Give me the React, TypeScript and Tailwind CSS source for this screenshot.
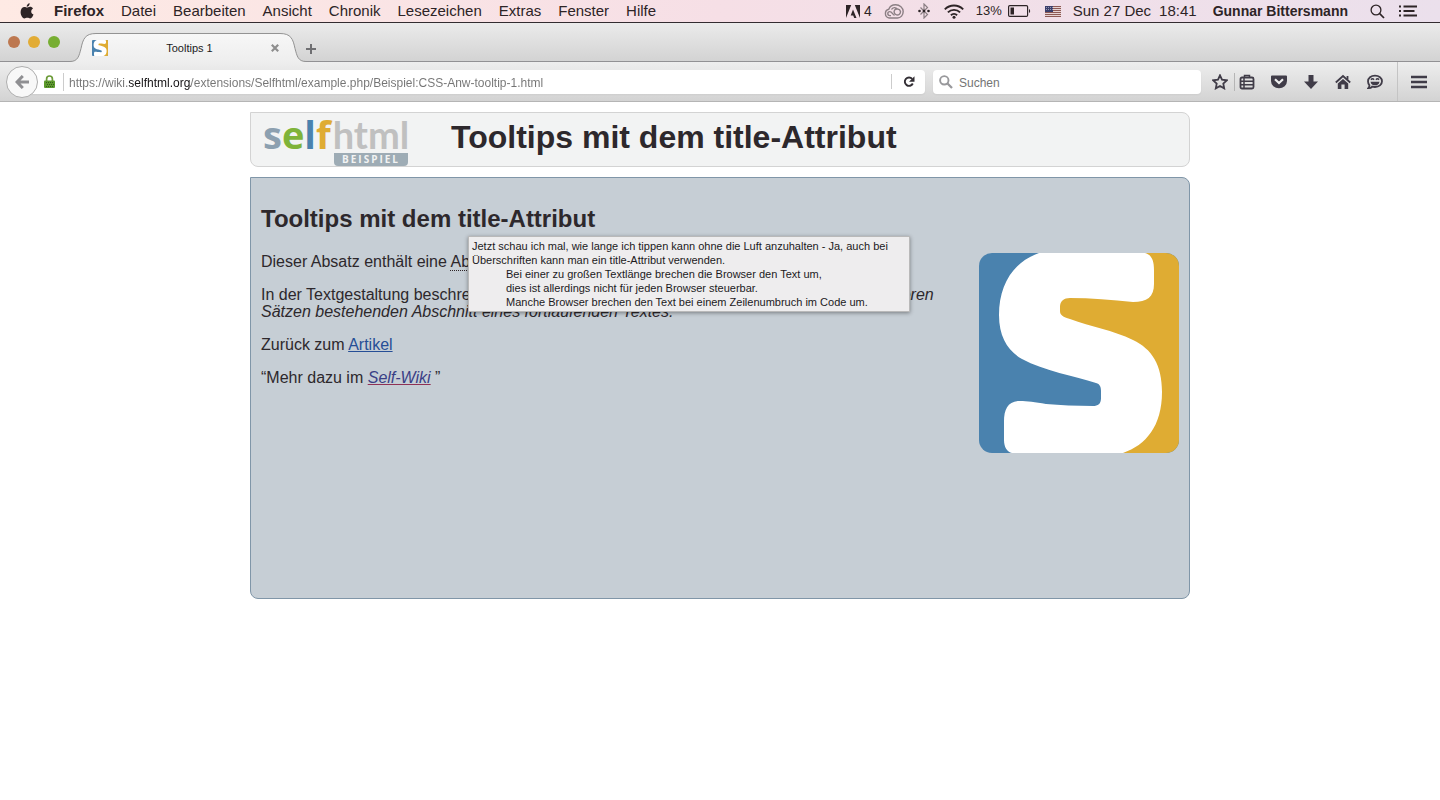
import { useState } from 'react';
import type { ReactNode } from 'react';

const MENUS = ['Datei', 'Bearbeiten', 'Ansicht', 'Chronik', 'Lesezeichen', 'Extras', 'Fenster', 'Hilfe'];

const URL = 'https://wiki.selfhtml.org/extensions/Selfhtml/example.php/Beispiel:CSS-Anw-tooltip-1.html';

// ── Icons ────────────────────────────────────
function SelfLogo({ className }: { className: string }) {
  return (
    <svg viewBox="0 0 200 200" className={className} aria-hidden="true">
      <clipPath id="tile"><rect width="200" height="200" rx="13" /></clipPath>
      <g clipPath="url(#tile)">
        <rect width="200" height="200" fill="#4a82ae" />
        <path d="M70 0H200V200H140V110L70 80Z" fill="#dfac33" />
        <path
          d="M60 0C34 9 20 32 20 62C20 84 29 98 43 106C65 118 96 123 117 130C121 131 122 134 122 138V145C122 151 119 153 114 153C97 153 81 152 67 151C56 149 48 148 41 148C29 148 25 156 25 169V187C25 194 28 199 33 200H144C167 192 183 173 183 139C183 112 173 96 154 87C134 77 112 74 91 66C84 64 81 62 81 58V54C81 48 85 45 91 45C112 45 133 47 154 49C168 49 175 44 175 31V17C175 8 173 2 166 0Z"
          fill="#fff"
        />
      </g>
    </svg>
  );
}

function AppleIcon() {
  return (
    <svg viewBox="0 0 14 16" className="h-4 w-3.5" fill="#2d2426" aria-hidden="true">
      <path d="M9.7.2c.1 1.9-1.4 3.6-3 3.5C6.5 2 8 .3 9.7.2ZM6.9 4.6c.7 0 1.6-.8 3.1-.8 1.3 0 2.4.7 3 1.6-2.7 1.7-2.1 5.1.5 6.1-.6 1.7-1.9 4-3.3 4-1 0-1.5-.7-2.9-.7s-1.9.7-2.9.7C2.7 15.5.6 12.3.6 9c0-3.2 1.9-5.1 3.9-5.1 1.1 0 1.9.7 2.4.7Z" />
    </svg>
  );
}

function AdobeIcon() {
  return (
    <svg viewBox="0 0 14 13" className="h-[13px] w-3.5" fill="#2d2426" aria-hidden="true">
      <path d="M0 0H5.2L0 13ZM8.8 0H14V13ZM7 4.5 10.5 13H8.2L7.2 10.4H4.7Z" />
    </svg>
  );
}

function CloudIcon() {
  return (
    <svg viewBox="0 0 20 15" className="h-[15px] w-5" fill="none" stroke="#8b7f84" strokeWidth="1.4" aria-hidden="true">
      <path d="M5.2 14A4.5 4.5 0 0 1 4.8 5.2C5.8 2.4 8.6.8 11.6.8C15.700.8 19.2 3.900 19.200 7.600C19.200 11.200 16.700 14 13.500 14Z" />
      <path d="M10.5 11.2C8.8 11.400 8.300 7.600 5.800 7.600A2 2 0 0 0 5.800 11.600H7M7.500 5.500C8.600 3.200 12 2.900 13.300 5.200M16.500 7.500A3.200 3.200 0 1 1 10.600 6.100C11.500 4.600 15.800 4.300 16.500 7.500Z" />
    </svg>
  );
}

function BluetoothIcon() {
  return (
    <svg viewBox="0 0 12 16" className="h-4 w-3" fill="none" aria-hidden="true">
      <path d="M2.5 4.5 9.5 11.5 6 15V1L9.5 4.5 2.5 11.5" stroke="#8b7f84" strokeWidth="1.2" />
      <g fill="#2d2426">
        <circle cx="1.5" cy="8" r="1.3" />
        <circle cx="6" cy="8" r="1.3" />
        <circle cx="10.5" cy="8" r="1.3" />
      </g>
    </svg>
  );
}

function WifiIcon() {
  return (
    <svg viewBox="0 0 20 15" className="h-[15px] w-5" fill="none" stroke="#2d2426" strokeWidth="1.9" aria-hidden="true">
      <path d="M.8 5.3A13 13 0 0 1 19.2 5.3" />
      <path d="M3.9 8.4A8.6 8.6 0 0 1 16.1 8.4" />
      <path d="M6.9 11.3A4.5 4.5 0 0 1 13.1 11.3" />
      <circle cx="10" cy="13.3" r="1.5" fill="#2d2426" stroke="none" />
    </svg>
  );
}

function BatteryIcon() {
  return (
    <svg viewBox="0 0 23 12" className="h-3 w-[23px]" aria-hidden="true">
      <rect x=".6" y=".6" width="19" height="10.8" rx="1.2" fill="none" stroke="#2d2426" strokeWidth="1.2" />
      <rect x="2.5" y="2.5" width="3.5" height="7" fill="#2d2426" />
      <path d="M21 4a2.3 2.3 0 0 1 0 4Z" fill="#2d2426" />
    </svg>
  );
}

function FlagIcon() {
  return (
    <svg viewBox="0 0 16 11" className="h-[11px] w-4" aria-hidden="true">
      <rect width="16" height="11" fill="#e6d3d3" />
      <path d="M0 .5H16M0 2.5H16M0 4.5H16M0 6.5H16M0 8.5H16M0 10.5H16" stroke="#8d5a55" />
      <rect width="8" height="6" fill="#3b3f6b" />
      <path d="M1 1.5H8M1 3.5H8" stroke="#a9a9c0" strokeWidth=".8" strokeDasharray="1 1" />
    </svg>
  );
}

function MenuSearchIcon() {
  return (
    <svg viewBox="0 0 15 15" className="size-[15px]" fill="none" stroke="#2d2426" aria-hidden="true">
      <circle cx="6" cy="6" r="4.9" strokeWidth="1.3" />
      <path d="M9.7 9.7 14 14" strokeWidth="1.7" />
    </svg>
  );
}

function MenuListIcon() {
  return (
    <svg viewBox="0 0 18 12" className="h-3 w-[18px]" stroke="#2d2426" strokeWidth="1.8" aria-hidden="true">
      <path d="M0 1.5H2M0 6H2M0 10.5H2M4.5 1.5H18M4.5 6H15.5M4.5 10.5H18" />
    </svg>
  );
}

function ToolIcon({ children }: { children: ReactNode }) {
  return (
    <svg viewBox="0 0 16 16" className="size-4" fill="none" stroke="#403c48" strokeWidth="1.8" aria-hidden="true">
      {children}
    </svg>
  );
}

function ToolButton({ label, children }: { label: string; children: ReactNode }) {
  return (
    <button type="button" aria-label={label} className="flex w-8 justify-center">
      <ToolIcon>{children}</ToolIcon>
    </button>
  );
}

// ── System menu bar ──────────────────────────
function MenuBar() {
  return (
    <nav className="flex h-[23px] items-center justify-between border-b border-[#332c30] bg-linear-to-r from-[#feeae4] via-[#f6dfe6] to-[#ebe0ec] pr-[23px] pl-5 text-[15px] leading-5 whitespace-nowrap text-[#2d2426]">
      <div className="flex items-center gap-[17px]">
        <button type="button" aria-label="Apple" className="mr-[3px]"><AppleIcon /></button>
        <button type="button" className="font-bold">Firefox</button>
        {MENUS.map(m => <button type="button" key={m}>{m}</button>)}
      </div>
      <div className="flex items-center">
        <AdobeIcon />
        <span className="mr-3 ml-1 text-sm">4</span>
        <CloudIcon />
        <span className="mx-3.5"><BluetoothIcon /></span>
        <WifiIcon />
        <span className="mr-1.5 ml-3 text-[13px]">13%</span>
        <BatteryIcon />
        <span className="mr-3 ml-3.5"><FlagIcon /></span>
        <span>Sun 27 Dec</span>
        <span className="mr-4 ml-2">18:41</span>
        <span className="mr-[22px] text-sm font-bold">Gunnar Bittersmann</span>
        <button type="button" aria-label="Suche" className="mr-3.5"><MenuSearchIcon /></button>
        <button type="button" aria-label="Mitteilungen"><MenuListIcon /></button>
      </div>
    </nav>
  );
}

// ── Firefox tabs ─────────────────────────────
function TabEdge({ className }: { className: string }) {
  return (
    <svg viewBox="0 0 26 29" className={className} aria-hidden="true">
      <defs>
        <linearGradient id="edge" x2="0" y2="1">
          <stop stopColor="#f7f7f7" />
          <stop offset="1" stopColor="#eeeeee" />
        </linearGradient>
      </defs>
      <path d="M0 28.5C8 28.5 9 23 11 15.5C13 6 15 .5 26 .5V29H0Z" fill="url(#edge)" />
      <path d="M0 28.5C8 28.5 9 23 11 15.5C13 6 15 .5 26 .5" fill="none" stroke="#939393" />
    </svg>
  );
}

function TabStrip() {
  return (
    <div className="flex h-[39px] items-end border-b border-[#929194] bg-linear-to-b from-[#ebebeb] to-[#d3d3d3] pl-2">
      <div className="mb-[13px] flex gap-2">
        <button type="button" aria-label="Schließen" className="size-3 rounded-full bg-[#bd7850]" />
        <button type="button" aria-label="Minimieren" className="size-3 rounded-full bg-[#e2ac35]" />
        <button type="button" aria-label="Maximieren" className="size-3 rounded-full bg-[#77ae32]" />
      </div>
      <div className="-mb-px ml-2.5 flex h-[29px]">
        <TabEdge className="h-[29px] w-[26px]" />
        <div className="flex w-[184px] items-center border-t border-[#939393] bg-linear-to-b from-[#f7f7f7] to-[#eeeeee]">
          <span className="-ml-1"><SelfLogo className="size-4" /></span>
          <span className="flex-1 text-center text-[11px] text-[#1c1a1c]">Tooltips 1</span>
          <button type="button" aria-label="Tab schließen" className="mr-px">
            <svg viewBox="0 0 8 8" className="size-2" stroke="#8e8e8e" strokeWidth="2.2" aria-hidden="true">
              <path d="M.8.8 7.2 7.2M7.2.8.8 7.2" />
            </svg>
          </button>
        </div>
        <TabEdge className="h-[29px] w-[26px] -scale-x-100" />
      </div>
      <button type="button" aria-label="Neuer Tab" className="mb-[7px]">
        <svg viewBox="0 0 10 10" className="size-2.5" stroke="#6f6f72" strokeWidth="2" aria-hidden="true">
          <path d="M5 0V10M0 5H10" />
        </svg>
      </button>
    </div>
  );
}

// ── Firefox toolbar ──────────────────────────
function Toolbar() {
  const [url, setUrl] = useState(URL);
  const [query, setQuery] = useState('');

  return (
    <div className="flex h-10 items-center border-b border-[#b5b5b5] bg-linear-to-b from-[#eeeeee] to-[#d3d3d3] pl-1.5">
      <button
        type="button"
        aria-label="Zurück"
        className="z-10 -mr-3 flex size-8 shrink-0 items-center justify-center rounded-full border border-[#aeaeae] bg-[#f8f8f8]"
      >
        <svg viewBox="0 0 14 14" className="size-3.5" fill="none" stroke="#8f8f92" strokeWidth="3" aria-hidden="true">
          <path d="M7.8 1 2 7 7.8 13M2 7H14" />
        </svg>
      </button>

      <div className="flex h-6 flex-1 items-center rounded-sm bg-white pl-[18px] shadow-xs">
        <svg viewBox="0 0 11 13" className="h-[13px] w-[11px]" aria-hidden="true">
          <path d="M2.6 6V3.9A2.9 2.9 0 0 1 8.4 3.9V6" fill="none" stroke="#6c9b38" strokeWidth="1.7" />
          <rect y="5.5" width="11" height="7.5" rx="1" fill="#5c9a2b" />
          <path d="M2 7.5H9M3 9.5H10M2 11.5H9" stroke="#35591f" strokeDasharray="1 1" />
        </svg>
        <span className="mr-[5px] ml-2 h-[18px] w-px bg-[#cccccc]" />
        {/* domain part of the address is darker than the rest */}
        <input
          aria-label="Adresse"
          value={url}
          onChange={e => setUrl(e.target.value)}
          className="h-6 min-w-0 flex-1 bg-[linear-gradient(90deg,#747474_60px,#141214_60px,#141214_122px,#747474_122px)] bg-clip-text pt-0.5 text-[12px] text-transparent caret-black outline-none"
        />
        <span className="h-[15px] w-px bg-[#cccccc]" />
        <button type="button" aria-label="Neu laden" className="flex w-[33px] justify-center">
          <svg viewBox="0 0 12 12" className="size-3" aria-hidden="true">
            <path d="M9.2 2.9A4.2 4.2 0 1 0 9.8 7.5" fill="none" stroke="#332f35" strokeWidth="1.9" />
            <path d="M11.5.3V5.8H6Z" fill="#332f35" />
          </svg>
        </button>
      </div>

      <label className="ml-2 flex h-6 w-[268px] items-center rounded-sm bg-white pl-1.5 shadow-xs">
        <svg viewBox="0 0 14 14" className="size-3.5" fill="none" stroke="#98989b" aria-hidden="true">
          <circle cx="5.3" cy="5.3" r="4.2" strokeWidth="1.9" />
          <path d="M8.5 8.5 13 13" strokeWidth="2.3" />
        </svg>
        <input
          aria-label="Suchen"
          placeholder="Suchen"
          value={query}
          onChange={e => setQuery(e.target.value)}
          className="ml-1.5 h-6 min-w-0 flex-1 bg-transparent pt-0.5 text-[12px] outline-none placeholder:text-[#747474]"
        />
      </label>

      <button type="button" aria-label="Lesezeichen hinzufügen" className="ml-[11px]">
        <ToolIcon>
          <path d="M8 1.3 10 5.7 14.8 6.3 11.3 9.6 12.2 14.4 8 12 3.8 14.4 4.7 9.6 1.2 6.3 6 5.7Z" />
        </ToolIcon>
      </button>
      <span className="ml-1.5 h-[18px] w-px bg-[#b5b5b5]" />
      <div className="-ml-1 flex">
        <ToolButton label="Lesezeichen anzeigen">
          <rect x="1.5" y="3.5" width="13" height="11" rx="1.5" />
          <path d="M5.5 3V1.5H10.5V3M5 4V14M2 7.2H14M2 10.8H14" strokeWidth="1.5" />
        </ToolButton>
        <ToolButton label="Pocket">
          <path d="M1 1.5H15A1 1 0 0 1 16 2.5V7A8 7.3 0 0 1 0 7V2.5A1 1 0 0 1 1 1.5Z" fill="#403c48" stroke="none" />
          <path d="M4 5.2 8 9 12 5.2" stroke="#efefef" strokeWidth="2.2" />
        </ToolButton>
        <ToolButton label="Downloads">
          <path d="M5.5 1H10.5V7.5H15L8 15 1 7.5H5.5Z" fill="#403c48" stroke="none" />
        </ToolButton>
        <ToolButton label="Startseite">
          <path d="M.8 8.5 8 2 15.2 8.5" />
          <path d="M8 5 13.2 9.6V15H9.6V10.5H6.4V15H2.8V9.6Z" fill="#403c48" stroke="none" />
          <path d="M12.5 2V5.5" />
        </ToolButton>
        <ToolButton label="Hello">
          <path d="M8 1.6C12 1.6 15 4 15 7.3S12 13 8 13C7 13 6 12.9 5.2 12.6 4.3 13.7 2.8 14.3 1.3 14.2 2.2 13.4 2.5 12.5 2.4 11.2 1.5 10.1 1 8.8 1 7.3 1 4 4 1.6 8 1.6Z" />
          <path d="M3.5 7.7H12.5C12 10.3 10.3 11.3 8 11.3S4 10.3 3.5 7.7Z" fill="#403c48" stroke="none" />
          <path d="M4 5.8C5 4.5 6 4.5 7 5.8M9 5.8C10 4.5 11 4.5 12 5.8" strokeWidth="1.5" />
        </ToolButton>
      </div>
      <span className="ml-1.5 h-full w-px bg-[#c4c4c4]" />
      <button type="button" aria-label="Menü öffnen" className="mr-[13px] ml-[13px]">
        <ToolIcon>
          <path d="M0 3H16M0 8H16M0 13H16" strokeWidth="2.6" />
        </ToolIcon>
      </button>
    </div>
  );
}

// ── Example page ─────────────────────────────
function PageHeader() {
  return (
    <header className="flex h-[55px] rounded-lg rounded-tl-none border border-[#d3d3d3] bg-[#f2f3f3] pl-3">
      <a href="#wiki" aria-label="selfhtml Beispiel" className="flex w-[188px] flex-col items-start">
        <span className="flex h-10 items-baseline font-['Open_Sans',sans-serif] text-[38px] leading-[42px] font-bold">
          <span className="text-[#8ca0b0]">s</span>
          <span className="text-[#7fb339]">e</span>
          <span className="text-[#4a82ae]">l</span>
          <span className="text-[#dfac33]">f</span>
          <span className="ml-0.5 font-['Lato',sans-serif] text-[#c0c0c0]">html</span>
        </span>
        <span className="ml-[71px] h-[13px] w-[74px] rounded-b-sm bg-[#9eacb5] pl-2 font-['Open_Sans',sans-serif] text-[10px] leading-[13px] font-bold tracking-[2px] text-[#f2f3f3]">
          BEISPIEL
        </span>
      </a>
      <h1 className="pt-[5px] text-[32px] leading-[38px] font-bold whitespace-nowrap">Tooltips mit dem title-Attribut</h1>
    </header>
  );
}

function TitleTooltip() {
  return (
    <div
      role="tooltip"
      className="absolute top-[58px] left-[217px] w-[442px] border border-[#b9b9b9] bg-[#eeedee] px-[3px] py-0.5 text-[11px] leading-[14px] whitespace-nowrap text-[#1c1a1c] shadow-[0_1px_4px_rgba(0,0,0,0.4)]"
    >
      <p>Jetzt schau ich mal, wie lange ich tippen kann ohne die Luft anzuhalten - Ja, auch bei</p>
      <p>Überschriften kann man ein title-Attribut verwenden.</p>
      <div className="pl-[34px]">
        <p>Bei einer zu großen Textlänge brechen die Browser den Text um,</p>
        <p>dies ist allerdings nicht für jeden Browser steuerbar.</p>
        <p>Manche Browser brechen den Text bei einem Zeilenumbruch im Code um.</p>
      </div>
    </div>
  );
}

function Article() {
  return (
    <main className="relative mt-2.5 min-h-[422px] rounded-lg rounded-tl-none border border-[#8096a8] bg-[#c6ced5] px-2.5 leading-[17px]">
      <h2 className="pt-[27px] pb-5 text-2xl leading-7 font-bold">Tooltips mit dem title-Attribut</h2>
      <div className="flex justify-between">
        <div className="flex max-w-[680px] flex-col gap-4">
          <p>
            Dieser Absatz enthält eine <abbr className="border-b border-dotted border-[#2d2426] no-underline">Abkürzung</abbr>.
          </p>
          <p>
            In der Textgestaltung beschreibt der Begriff Absatz gewöhnlich einen{' '}
            <em>aus einem oder mehreren Sätzen bestehenden Abschnitt eines fortlaufenden Textes.</em>
          </p>
          <p>
            Zurück zum <a href="#artikel" className="text-[#264e96] underline">Artikel</a>
          </p>
          <p>
            “Mehr dazu im <a href="#wiki" className="text-[#3a3f86] italic underline decoration-[#8f3155]">Self-Wiki</a> ”
          </p>
        </div>
        <SelfLogo className="size-[200px] shrink-0" />
      </div>
      <TitleTooltip />
    </main>
  );
}

export default function App() {
  return (
    <div className="min-h-screen bg-white font-['Liberation_Sans',Arial,sans-serif] text-[#2d282c]">
      <MenuBar />
      <TabStrip />
      <Toolbar />
      <div className="mx-auto max-w-[940px] pt-2.5">
        <PageHeader />
        <Article />
      </div>
    </div>
  );
}
